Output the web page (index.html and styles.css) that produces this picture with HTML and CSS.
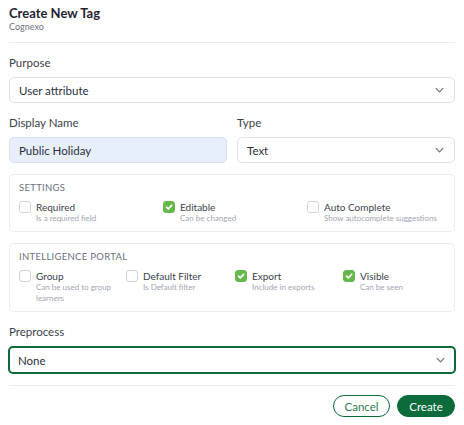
FILE: index.html
```html
<!DOCTYPE html>
<html>
<head>
<meta charset="utf-8">
<link rel="stylesheet" href="styles.css">
</head>
<body>
<div class="dialog">
  <header class="head">
    <h1 class="title">Create New Tag</h1>
    <div class="subtitle">Cognexo</div>
  </header>
  <hr class="divider">
  <div class="field">
    <label class="label">Purpose</label>
    <div class="select"><span>User attribute</span><svg class="chev" viewBox="0 0 10 6"><path d="M1 1l4 4 4-4"/></svg></div>
  </div>
  <div class="row2">
    <div class="field">
      <label class="label">Display Name</label>
      <div class="input filled">Public Holiday</div>
    </div>
    <div class="field">
      <label class="label">Type</label>
      <div class="select"><span>Text</span><svg class="chev" viewBox="0 0 10 6"><path d="M1 1l4 4 4-4"/></svg></div>
    </div>
  </div>
  <section class="card">
    <div class="card-title">SETTINGS</div>
    <div class="opts opts3">
      <div class="opt"><span class="cb"></span><div><div class="opt-name">Required</div><div class="opt-desc">Is a required field</div></div></div>
      <div class="opt"><span class="cb on"><svg viewBox="0 0 10 10"><path d="M2.5 5.2l1.8 1.8 3.3-3.6"/></svg></span><div><div class="opt-name">Editable</div><div class="opt-desc">Can be changed</div></div></div>
      <div class="opt"><span class="cb"></span><div><div class="opt-name">Auto Complete</div><div class="opt-desc">Show autocomplete suggestions</div></div></div>
    </div>
  </section>
  <section class="card">
    <div class="card-title">INTELLIGENCE PORTAL</div>
    <div class="opts opts4">
      <div class="opt"><span class="cb"></span><div><div class="opt-name">Group</div><div class="opt-desc">Can be used to group learners</div></div></div>
      <div class="opt"><span class="cb"></span><div><div class="opt-name">Default Filter</div><div class="opt-desc">Is Default filter</div></div></div>
      <div class="opt"><span class="cb on"><svg viewBox="0 0 10 10"><path d="M2.5 5.2l1.8 1.8 3.3-3.6"/></svg></span><div><div class="opt-name">Export</div><div class="opt-desc">Include in exports</div></div></div>
      <div class="opt"><span class="cb on"><svg viewBox="0 0 10 10"><path d="M2.5 5.2l1.8 1.8 3.3-3.6"/></svg></span><div><div class="opt-name">Visible</div><div class="opt-desc">Can be seen</div></div></div>
    </div>
  </section>
  <div class="field pre">
    <label class="label">Preprocess</label>
    <div class="select focus"><span>None</span><svg class="chev" viewBox="0 0 10 6"><path d="M1 1l4 4 4-4"/></svg></div>
  </div>
  <hr class="divider">
  <footer class="actions">
    <button class="btn ghost">Cancel</button>
    <button class="btn primary">Create</button>
  </footer>
</div>
</body>
</html>
```

FILE: styles.css
```css
* { box-sizing: border-box; }
body {
  margin: 0;
  background: #fff;
  font-family: "Lato", "Inter", sans-serif;
  color: #2b2f3a;
}
.dialog {
  width: 464px;
  padding: 4px 9px 0 9px;
  display: flex;
  flex-direction: column;
}
.title {
  margin: 0;
  font-size: 13px;
  font-weight: 700;
  line-height: 18px;
  color: #1f2330;
}
.subtitle {
  font-size: 9px;
  color: #6b7280;
  line-height: 12px;
  margin-top: -1px;
}
.divider {
  border: 0;
  border-top: 1px solid #e8ebf0;
  margin: 9px 0 0 0;
  width: 100%;
}
.field { display: flex; flex-direction: column; }
.label {
  font-size: 11.5px;
  color: #3b3f4a;
  line-height: 14px;
  margin-top: 13px;
  margin-bottom: 7px;
}
.select, .input {
  height: 26px;
  border: 1px solid #dde1e8;
  border-radius: 5px;
  display: flex;
  align-items: center;
  justify-content: space-between;
  padding: 0 9px 0 9px;
  font-size: 11.5px;
  color: #2b2f3a;
}
.input.filled { background: #e8effc; border-color: #d6e0f2; }
.chev { width: 9px; height: 6px; fill: none; stroke: #6b7280; stroke-width: 1.3; margin-right: 1px; }
.row2 { display: grid; grid-template-columns: 1fr 1fr; gap: 10px; }
.card {
  border: 1px solid #e8ebf0;
  border-radius: 5px;
  padding: 7px 9px 7px 9px;
  margin-top: 11px;
}
.card-title {
  font-size: 9.5px;
  letter-spacing: 0.3px;
  color: #6b7080;
  line-height: 12px;
}
.opts { display: grid; margin-top: 7px; }
.opts3 { grid-template-columns: 144px 144px 1fr; }
.opts4 { grid-template-columns: 107px 109px 108px 1fr; }
.opt { display: flex; gap: 5px; align-items: flex-start; }
.cb {
  flex: none;
  width: 12px; height: 12px;
  border: 1px solid #cfd4dc;
  border-radius: 3px;
  background: #fff;
  display: flex; align-items: center; justify-content: center;
}
.cb.on { background: #67b84a; border-color: #67b84a; }
.cb svg { width: 10px; height: 10px; fill: none; stroke: #fff; stroke-width: 1.7; stroke-linecap: round; stroke-linejoin: round; }
.opt-name { font-size: 10px; line-height: 12px; color: #3b3f4a; }
.opt-desc { font-size: 8px; line-height: 11px; color: #a0a6b2; max-width: 82px; }
.opts3 .opt-desc { max-width: none; }
.pre .label { margin-top: 13px; }
.select.focus { border: 2px solid #0b6b3b; height: 28px; padding-left: 8px; padding-right: 8px; margin: 0 -1px; }
.pre + .divider { margin-top: 11px; }
.actions {
  display: flex;
  justify-content: flex-end;
  gap: 7px;
  margin-top: 9px;
}
.btn {
  height: 22px;
  border-radius: 11px;
  font-family: inherit;
  font-size: 11.5px;
  padding: 0;
}
.ghost { background: #fff; border: 1.5px solid #0b6b3b; color: #2a7a52; width: 57px; }
.primary { background: #0b6b3b; border: 1.5px solid #0b6b3b; color: #fff; width: 58px; }
```
